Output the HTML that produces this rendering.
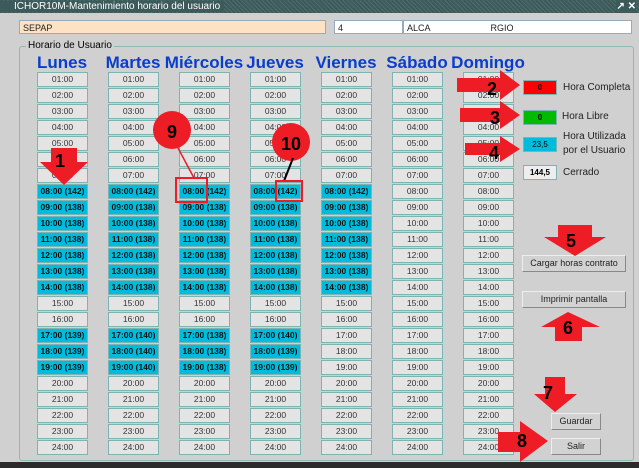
<!DOCTYPE html><html><head><meta charset="utf-8"><style>
body{margin:0;width:639px;height:468px;background:#2b2b2b;font-family:"Liberation Sans",sans-serif;position:relative;overflow:hidden}
.win{position:absolute;left:0;top:0;width:639px;height:462px;background:#d0d0d0}
.title{position:absolute;left:0;top:0;width:639px;height:13px;background:#3c5a5a repeating-linear-gradient(45deg,#3c5a5a 0 2px,#4d6d6d 2px 3px);color:#fff;font-size:10px;line-height:13px}
.title span{background:#3c5a5a;padding:0 4px 0 14px}
.fld{position:absolute;height:14px;border:1px solid #9ab;font-size:9px;line-height:14px;padding-left:3px;box-sizing:border-box;color:#222}
.grp{position:absolute;left:19px;top:46px;width:613px;height:413px;border:1px solid #8fb8b8;border-radius:3px}
.gl{position:absolute;left:26px;top:40px;background:#d0d0d0;font-size:10px;padding:0 2px;color:#000}
.hd{position:absolute;top:53px;font-size:17px;font-weight:bold;color:#0a3dcc;text-align:center;width:90px}
.c{position:absolute;width:51px;height:15px;box-sizing:border-box;border:1px solid #7fb3b3;background:#e4e4e4;font-size:8.5px;line-height:13px;text-align:center;color:#333}
.c.u{background:#00bcdc;font-weight:bold;color:#111}
.btn{position:absolute;height:17px;box-sizing:border-box;background:#d2d2d2;border:1px solid #eee;border-right-color:#888;border-bottom-color:#888;font-size:9px;text-align:center;line-height:15px;color:#222}
.lb{position:absolute;font-size:10px;color:#222}
.lg{position:absolute;left:523px;width:34px;height:15px;box-sizing:border-box;border:1px solid #7fb3b3;font-size:8px;font-weight:bold;text-align:center;line-height:13px}
</style></head><body><div class="win">
<div class="title"><span>ICHOR10M-Mantenimiento horario del usuario</span><b style="position:absolute;right:3px;top:0;background:#3c5a5a">&#x2197; ✕</b></div>
<div class="fld" style="left:19px;top:20px;width:307px;background:#fde2c4">SEPAP</div>
<div class="fld" style="left:334px;top:20px;width:69px;background:#fff">4</div>
<div class="fld" style="left:403px;top:20px;width:229px;background:#fff">ALCA<span style="margin-left:60px">RGIO</span></div>
<div class="grp"></div><div class="gl">Horario de Usuario</div>
<div id="g"></div>
<div class="lg" style="top:80px;background:#f00">0</div><div class="lb" style="left:563px;top:82px">Hora Completa</div>
<div class="lg" style="top:110px;background:#0b0">0</div><div class="lb" style="left:562px;top:111px">Hora Libre</div>
<div class="lg" style="top:137px;background:#00bcdc;font-weight:normal">23,5</div><div class="lb" style="left:563px;top:130px;line-height:14px">Hora Utilizada<br>por el Usuario</div>
<div class="lg" style="top:165px;background:#eee">144,5</div><div class="lb" style="left:563px;top:167px">Cerrado</div>
<div class="btn" style="left:522px;top:255px;width:104px">Cargar horas contrato</div>
<div class="btn" style="left:522px;top:291px;width:104px">Imprimir pantalla</div>
<div class="btn" style="left:551px;top:413px;width:50px">Guardar</div>
<div class="btn" style="left:551px;top:438px;width:50px">Salir</div>
<svg style="position:absolute;left:0;top:0" width="639" height="468" font-family="Liberation Sans" font-weight="bold" font-size="18" text-anchor="middle">
<g fill="#ee1c25">
<polygon points="51,148 77,148 77,162 88,162 64,185 40,162 51,162"/>
<polygon points="457,78 500,78 500,70 520,85 500,100 500,92 457,92"/>
<polygon points="460,108 500,108 500,101 520,115 500,129 500,122 460,122"/>
<polygon points="465,143 500,143 500,136 520,149 500,162 500,155 465,155"/>
<polygon points="558,225 592,225 592,237 606,237 575,256 544,237 558,237"/>
<polygon points="555,341 582,341 582,327 600,327 568,312 541,327 555,327"/>
<polygon points="545,377 565,377 565,394 577,394 555,412 534,394 545,394"/>
<polygon points="498,432 520,432 520,421 548,441 520,462 520,452 498,452"/>
<circle cx="172" cy="130" r="19"/><circle cx="291" cy="142" r="19"/>
</g>
<line x1="178" y1="148" x2="194" y2="178" stroke="#ee1c25" stroke-width="1.5"/>
<line x1="293" y1="158" x2="284" y2="181" stroke="#000" stroke-width="2"/>
<rect x="176" y="178" width="31" height="24" fill="none" stroke="#ee1c25" stroke-width="2"/>
<rect x="276" y="181" width="26" height="20" fill="none" stroke="#ee1c25" stroke-width="2"/>
<g fill="#000"><text x="60" y="167">1</text><text x="492" y="95">2</text><text x="495" y="124">3</text><text x="494" y="159">4</text><text x="571" y="247">5</text><text x="568" y="334">6</text><text x="548" y="399">7</text><text x="522" y="447">8</text><text x="172" y="138">9</text><text x="291" y="150">10</text></g>
</svg>
</div>
<script>
var g=document.getElementById('g'),h='';
var days=['Lunes','Martes','Miércoles','Jueves','Viernes','Sábado','Domingo'];
var x0=[37,108,179,250,321,392,463];
var u={0:{17:139,18:139,19:139},1:{17:140,18:140,19:140},2:{17:138,18:138,19:138},3:{17:140,18:139,19:139},4:{}};
for(var d=0;d<7;d++){h+='<div class="hd" style="left:'+(x0[d]-20)+'px">'+days[d]+'</div>';
for(var r=1;r<=24;r++){var t=(r<10?'0':'')+r+':00',v=null;
if(d<5){if(r==8)v=142;else if(r>=9&&r<=14)v=138;else if(u[d][r])v=u[d][r];}
h+='<div class="c'+(v?' u':'')+'" style="left:'+x0[d]+'px;top:'+(72+(r-1)*16)+'px">'+t+(v?' ('+v+')':'')+'</div>';}}
g.innerHTML=h;
</script></body></html>
